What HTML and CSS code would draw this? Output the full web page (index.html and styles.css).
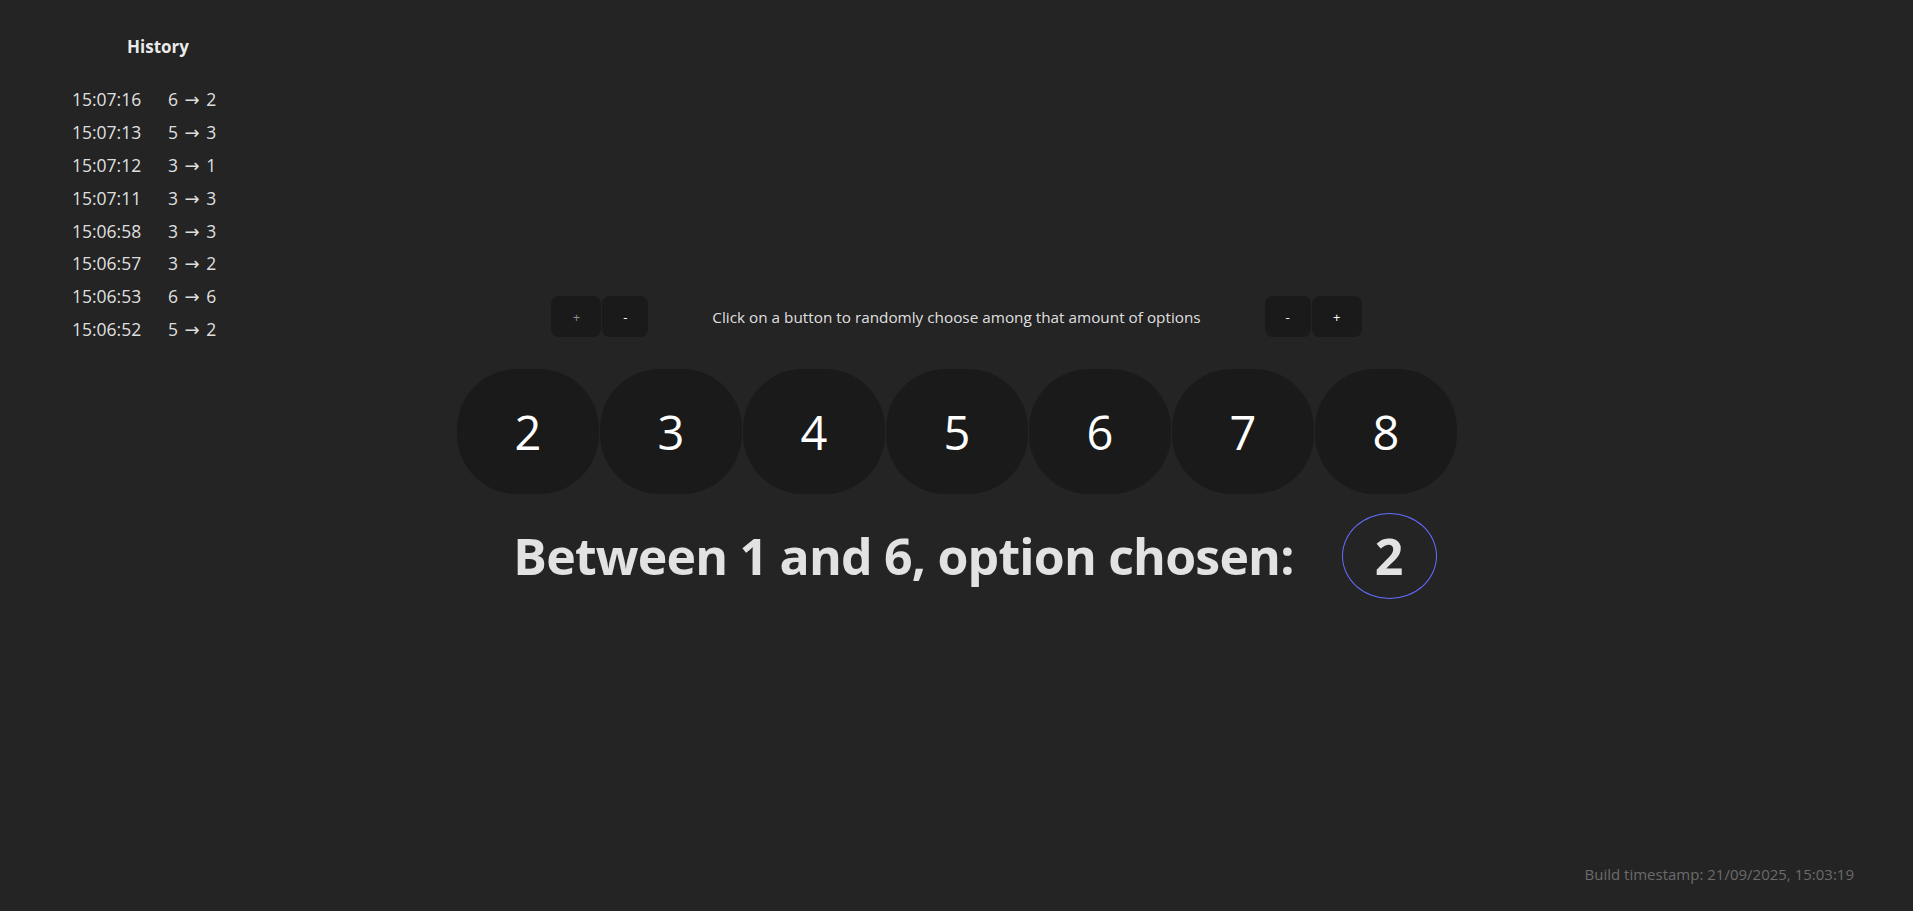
FILE: index.html
```html
<!DOCTYPE html>
<html lang="en">
<head>
<meta charset="utf-8">
<title>Random chooser</title>
<link rel="stylesheet" href="styles.css">
</head>
<body>
<div class="page">
  <aside class="history">
    <h2 class="history-title">History</h2>
    <ul class="history-list">
      <li class="history-row"><span class="h-time">15:07:16</span><span class="h-val">6 <span class="arrow">→</span> 2</span></li>
      <li class="history-row"><span class="h-time">15:07:13</span><span class="h-val">5 <span class="arrow">→</span> 3</span></li>
      <li class="history-row"><span class="h-time">15:07:12</span><span class="h-val">3 <span class="arrow">→</span> 1</span></li>
      <li class="history-row"><span class="h-time">15:07:11</span><span class="h-val">3 <span class="arrow">→</span> 3</span></li>
      <li class="history-row"><span class="h-time">15:06:58</span><span class="h-val">3 <span class="arrow">→</span> 3</span></li>
      <li class="history-row"><span class="h-time">15:06:57</span><span class="h-val">3 <span class="arrow">→</span> 2</span></li>
      <li class="history-row"><span class="h-time">15:06:53</span><span class="h-val">6 <span class="arrow">→</span> 6</span></li>
      <li class="history-row"><span class="h-time">15:06:52</span><span class="h-val">5 <span class="arrow">→</span> 2</span></li>
    </ul>
  </aside>

  <main class="main">
    <div class="controls">
      <div class="step-group">
        <button class="step step-plus is-dim">+</button>
        <button class="step step-minus">-</button>
      </div>
      <p class="hint">Click on a button to randomly choose among that amount of options</p>
      <div class="step-group">
        <button class="step step-minus">-</button>
        <button class="step step-plus">+</button>
      </div>
    </div>

    <div class="options">
      <button class="opt">2</button>
      <button class="opt">3</button>
      <button class="opt">4</button>
      <button class="opt">5</button>
      <button class="opt">6</button>
      <button class="opt">7</button>
      <button class="opt">8</button>
    </div>

    <div class="result">
      <h1 class="result-text">Between 1 and 6, option chosen:</h1>
      <div class="result-circle">2</div>
    </div>
  </main>

  <footer class="build">Build timestamp: 21/09/2025, 15:03:19</footer>
</div>
</body>
</html>
```
FILE: styles.css
```css
* { box-sizing: border-box; }

html, body {
  margin: 0;
  padding: 0;
  background: #242424;
}

body {
  font-family: "Open Sans", "Noto Sans", sans-serif;
  color: rgba(255, 255, 255, 0.87);
}

.page {
  display: grid;
  grid-template-columns: 1fr;
  grid-template-rows: 1fr auto;
  min-height: 100vh;
}

/* History sidebar */
.history {
  grid-area: 1 / 1;
  justify-self: start;
  align-self: start;
  width: 244px;
  padding: 36px 0 0 72px;
}

.history-title {
  margin: 0 0 25px 0;
  font-size: 17px;
  line-height: 22px;
  font-weight: 700;
  text-align: center;
  color: rgba(255, 255, 255, 0.92);
}

.history-list {
  list-style: none;
  margin: 0;
  padding: 0;
}

.history-row {
  display: grid;
  grid-template-columns: 96px auto;
  height: 32.8px;
  align-items: center;
  font-size: 17.5px;
}

.h-val {
  word-spacing: 2px;
}

.arrow {
  font-family: "DejaVu Sans", "Liberation Sans", sans-serif;
  font-size: 18px;
}

/* Main column */
.main {
  grid-area: 1 / 1;
  justify-self: center;
  align-self: start;
  width: 1000px;
  padding-top: 296px;
  display: flex;
  flex-direction: column;
  align-items: center;
}

.controls {
  display: flex;
  align-items: center;
  gap: 64px;
  height: 41px;
}

.step-group {
  display: flex;
  gap: 1px;
}

.step {
  height: 41px;
  border: none;
  border-radius: 8px;
  background: #1a1a1a;
  color: #ffffff;
  font-family: "Open Sans", sans-serif;
  font-size: 13px;
  padding: 0;
}

.step-plus { width: 50px; }
.step-minus { width: 46px; }
.step.is-dim { color: #8c8c8c; }

.hint {
  margin: 0;
  font-size: 15.3px;
  color: rgba(255, 255, 255, 0.87);
}

.options {
  display: flex;
  gap: 1px;
  margin-top: 32px;
}

.opt {
  width: 142px;
  height: 125px;
  border: none;
  border-radius: 60px;
  background: #1a1a1a;
  color: #ffffff;
  font-family: "Open Sans", sans-serif;
  font-size: 47px;
  font-weight: 400;
  padding: 0 0 0 1px;
}

.result {
  display: flex;
  align-items: center;
  gap: 48px;
  margin-top: 19px;
  padding-left: 37px;
}

.result-text {
  margin: 0;
  font-size: 50px;
  font-weight: 700;
  letter-spacing: -0.8px;
  line-height: 1.2;
  color: rgba(255, 255, 255, 0.87);
}

.result-circle {
  width: 95px;
  height: 86px;
  border: 1px solid #646cff;
  border-radius: 50%;
  display: flex;
  align-items: center;
  justify-content: center;
  font-size: 50px;
  font-weight: 700;
  color: rgba(255, 255, 255, 0.87);
}

/* Footer */
.build {
  grid-row: 2;
  justify-self: end;
  padding: 0 59px 27px 0;
  font-size: 15px;
  color: #6b6b6b;
}
```
